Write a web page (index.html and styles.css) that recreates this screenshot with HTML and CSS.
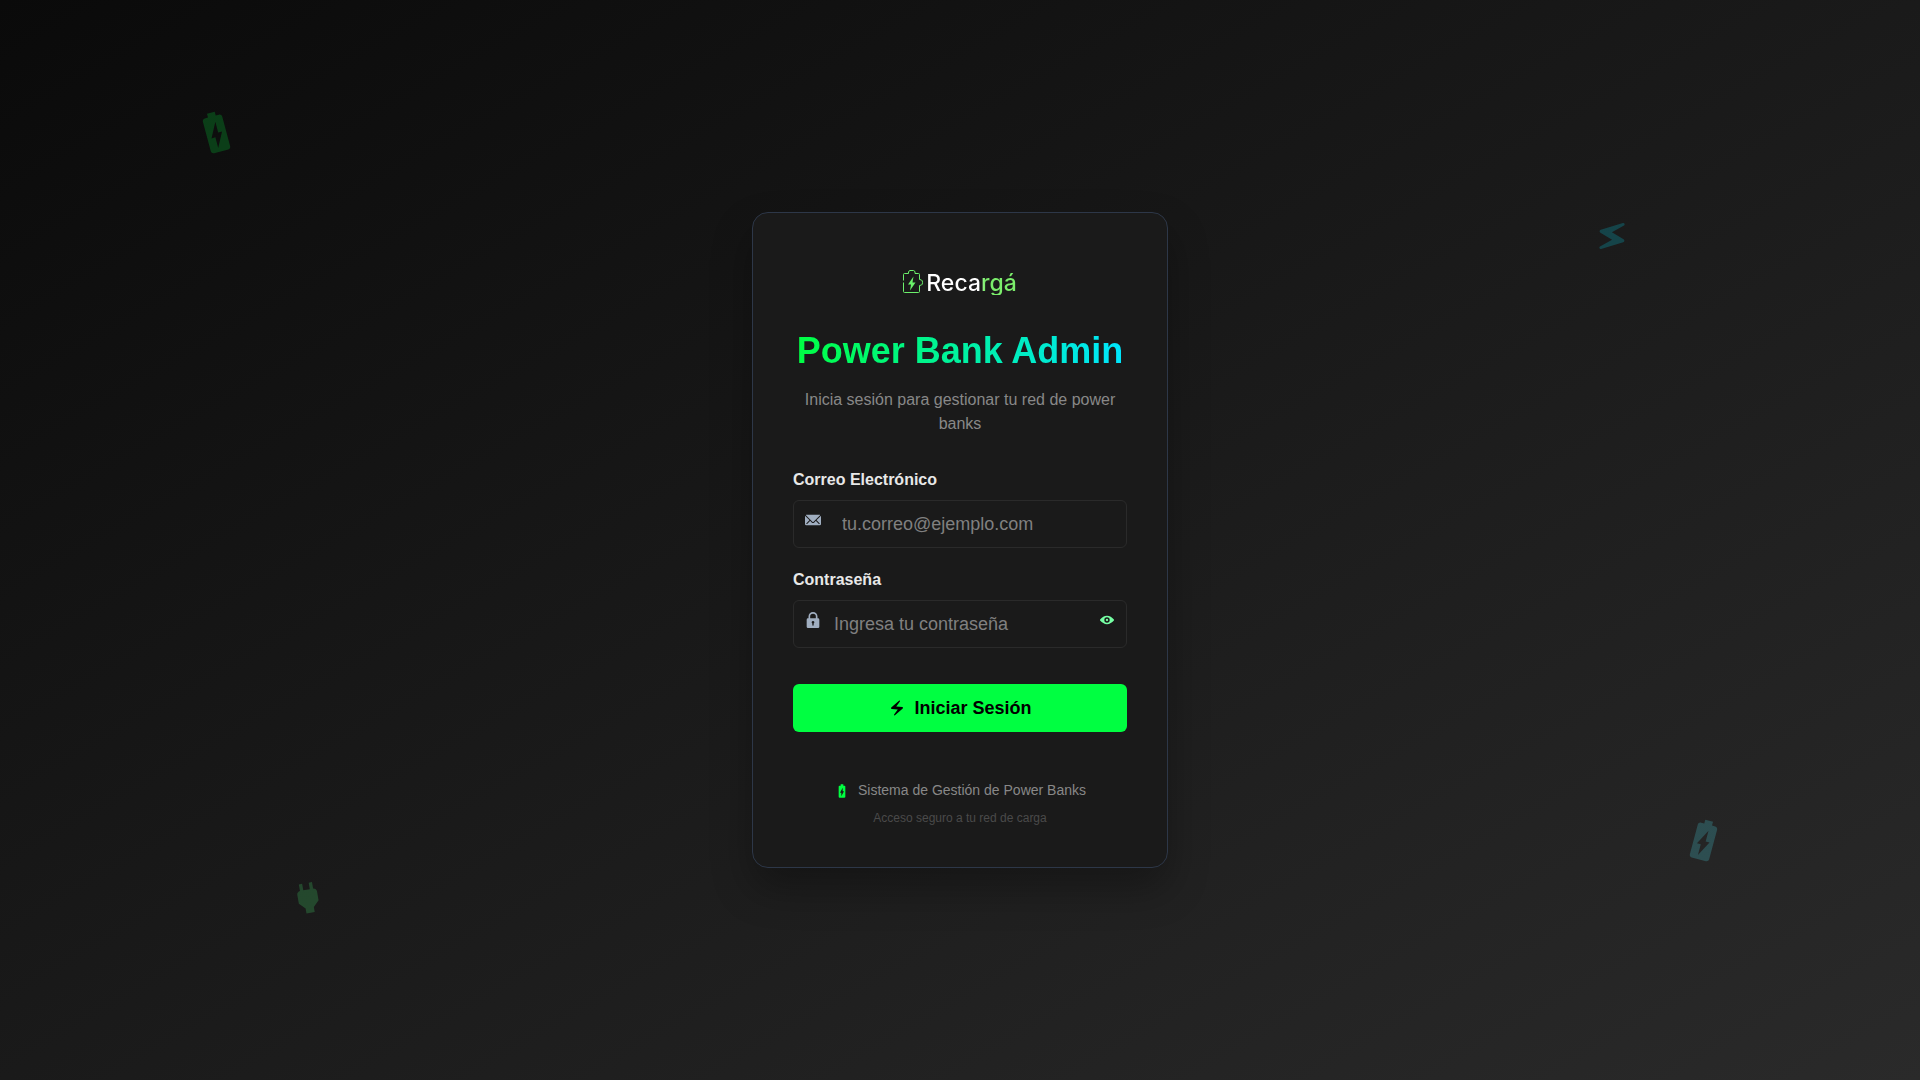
FILE: index.html
```
<!DOCTYPE html>
<html lang="es">
<head>
    <meta charset="UTF-8">
    <meta name="viewport" content="width=device-width, initial-scale=1.0">
    <title>Power Bank Admin</title>
    <link rel="stylesheet" href="styles.css">
</head>
<body>
    <!-- Iconos compartidos -->
    <svg class="sprite" aria-hidden="true">
        <symbol id="battery" viewBox="0 0 24 24">
            <path d="M15.67 4H14V2h-4v2H8.33C7.6 4 7 4.6 7 5.33v15.33C7 21.4 7.6 22 8.33 22h7.33c.74 0 1.34-.6 1.34-1.33V5.33C17 4.6 16.4 4 15.67 4zM11 20v-5.5H9L13 7v5.5h2L11 20z"/>
        </symbol>
        <symbol id="bolt" viewBox="0 0 24 24">
            <path d="M14.69 2.21 4.33 11.49c-.64.58-.28 1.65.58 1.73L13 14l-4.85 6.76c-.22.31-.19.74.08 1.01.3.3.77.31 1.08.02l10.36-9.28c.64-.58.28-1.65-.58-1.73L11 10l4.85-6.76c.22-.31.19-.74-.08-1.01-.3-.3-.77-.31-1.08-.02z"/>
        </symbol>
        <symbol id="plug" viewBox="0 0 24 24">
            <path d="M16.01 7 16 3h-2v4h-4V3H8v4h-.01C7 6.99 6 7.99 6 8.99v5.49L9.5 18v3h5v-3l3.5-3.51v-5.5c0-1-1-2-1.99-1.99z"/>
        </symbol>
    </svg>

    <!-- Iconos de fondo -->
    <svg class="floating battery-left" aria-hidden="true"><use href="#battery"/></svg>
    <svg class="floating bolt-right" aria-hidden="true"><use href="#bolt"/></svg>
    <svg class="floating plug-left" aria-hidden="true"><use href="#plug"/></svg>
    <svg class="floating battery-right" aria-hidden="true"><use href="#battery"/></svg>

    <main class="container">
        <div class="card">
            <div class="logo">
                <svg class="logo-icon" viewBox="1 2 20 26" aria-hidden="true">
                    <path class="outline" d="M1.5 12.5V6.5Q1.5 5.5 2.5 5.5H6.5V4Q7 2.5 8 2.5H11.5Q12.5 2.5 13 4V5.5H16.5Q17.5 5.5 17.5 6.5V11.5L19.5 12Q20.5 12.5 20.5 14.5Q20.5 16.5 19.5 17L17.5 17.5V23.5Q17.5 24.5 16.5 24.5H2.5Q1.5 24.5 1.5 23.5V14.5"/>
                    <path class="spark" d="M11.5 8.5L6 16.5H9L8 22.5L13.5 14.5H10.5Z"/>
                </svg>
                <span class="logo-text">Recargá</span>
            </div>

            <h1>Power Bank Admin</h1>
            <p class="subtitle">Inicia sesión para gestionar tu red de power banks</p>

            <form>
                <div class="form-group">
                    <label for="email">Correo Electrónico</label>
                    <div class="input-group">
                        <svg class="input-icon" viewBox="0 0 24 24" aria-hidden="true">
                            <path d="M11.114,14.556a1.252,1.252,0,0,0,1.768,0L22.568,4.87a.5.5,0,0,0-.281-.849A1.966,1.966,0,0,0,22,4H2a1.966,1.966,0,0,0-.289.021.5.5,0,0,0-.281.849Z"/>
                            <path d="M23.888,5.832a.182.182,0,0,0-.2.039l-6.2,6.2a.251.251,0,0,0,0,.354l4.343,4.343a.75.75,0,1,1-1.06,1.061l-4.343-4.343a.249.249,0,0,0-.354,0l-2.123,2.123a2.75,2.75,0,0,1-3.888,0L7.939,13.485a.251.251,0,0,0-.354,0L3.242,17.828a.75.75,0,1,1-1.061-1.061l4.343-4.343a.251.251,0,0,0,0-.354l-6.2-6.2a.18.18,0,0,0-.2-.039A.182.182,0,0,0,0,6V18a2,2,0,0,0,2,2H22a2,2,0,0,0,2-2V6A.181.181,0,0,0,23.888,5.832Z"/>
                        </svg>
                        <input class="email-input" type="email" id="email" placeholder="tu.correo@ejemplo.com">
                    </div>
                </div>

                <div class="form-group">
                    <label for="password">Contraseña</label>
                    <div class="input-group">
                        <svg class="input-icon" viewBox="0 0 24 24" aria-hidden="true">
                            <path d="M19.5,9.5h-.75V6.75a6.75,6.75,0,0,0-13.5,0V9.5H4.5a2,2,0,0,0-2,2V22a2,2,0,0,0,2,2h15a2,2,0,0,0,2-2V11.5A2,2,0,0,0,19.5,9.5Zm-9.5,6a2,2,0,1,1,3,1.723V19.5a1,1,0,0,1-2,0V17.223A1.994,1.994,0,0,1,10,15.5ZM7.75,6.75a4.25,4.25,0,0,1,8.5,0V9a.5.5,0,0,1-.5.5h-7.5a.5.5,0,0,1-.5-.5Z"/>
                        </svg>
                        <input class="password-input" type="password" id="password" placeholder="Ingresa tu contraseña">
                        <button class="toggle-password" type="button" id="togglePassword" aria-label="Mostrar contraseña">
                            <svg viewBox="0 0 24 24" aria-hidden="true">
                                <path d="M23.432,10.524C20.787,7.614,16.4,4.538,12,4.6,7.6,4.537,3.213,7.615.568,10.524a2.211,2.211,0,0,0,0,2.948C3.182,16.351,7.507,19.4,11.839,19.4h.308c4.347,0,8.671-3.049,11.288-5.929A2.21,2.21,0,0,0,23.432,10.524ZM7.4,12A4.6,4.6,0,1,1,12,16.6,4.6,4.6,0,0,1,7.4,12Z"/>
                                <circle cx="12" cy="12" r="2"/>
                            </svg>
                        </button>
                    </div>
                </div>

                <button class="btn" type="submit">
                    <svg aria-hidden="true"><use href="#bolt"/></svg>
                    Iniciar Sesión
                </button>
            </form>

            <div class="card-footer">
                <p class="system">
                    <svg aria-hidden="true"><use href="#battery"/></svg>
                    Sistema de Gestión de Power Banks
                </p>
                <p class="access">Acceso seguro a tu red de carga</p>
            </div>
        </div>
    </main>

    <script>
        const password = document.getElementById('password');

        // Mostrar u ocultar la contraseña
        document.getElementById('togglePassword').addEventListener('click', () => {
            password.type = password.type === 'password' ? 'text' : 'password';
        });
    </script>
</body>
</html>
```
FILE: styles.css
```
* {
    margin: 0;
    padding: 0;
    box-sizing: border-box;
}

body {
    position: relative;
    display: flex;
    align-items: center;
    justify-content: center;
    min-height: 100vh;
    overflow-x: hidden;
    font-family: "Liberation Sans", Arial, sans-serif;
    font-size: 16px;
    line-height: 24px;
    color: #e8e8e8;
    background: linear-gradient(to bottom right, #0a0a0a 0%, #1a1a1a 50%, #2a2a2a 100%);
}

svg {
    display: block;
    flex-shrink: 0;
    fill: currentColor;
}

.sprite {
    position: absolute;
    width: 0;
    height: 0;
}

/* Iconos de fondo */
.floating {
    position: absolute;
    width: 40px;
    height: 40px;
    opacity: 0.2;
}

.battery-left {
    top: 10%;
    left: 10%;
    width: 48px;
    height: 48px;
    color: #00ff41;
    transform: rotate(-15deg);
}

.bolt-right {
    top: 20%;
    right: 15%;
    color: #00e5ff;
    transform: rotate(25deg);
}

.plug-left {
    bottom: 15%;
    left: 15%;
    color: #4dff7c;
    transform: rotate(-10deg);
}

.battery-right {
    right: 10%;
    bottom: 20%;
    width: 48px;
    height: 48px;
    color: #4df0ff;
    transform: rotate(15deg);
}

.container {
    position: relative;
    width: 100%;
    max-width: 448px;
    padding: 16px;
}

.card {
    padding: 40px;
    background: #1a1a1a;
    border: 1px solid #2d3748;
    border-radius: 16px;
    box-shadow: 0 20px 40px rgba(0, 0, 0, 0.3);
}

.logo {
    display: flex;
    align-items: center;
    justify-content: center;
    gap: 3px;
    height: 60px;
    margin-bottom: 16px;
}

.logo-icon {
    width: 20px;
    height: 26px;
    color: #6bf06b;
}

.logo-icon .outline {
    fill: none;
    stroke: currentColor;
}

.logo-text {
    font-family: Inter, "Open Sans", sans-serif;
    font-size: 23px;
    font-weight: 500;
    background: linear-gradient(90deg, #fff 58%, #7bed6b 64%);
    -webkit-background-clip: text;
    background-clip: text;
    color: transparent;
}

h1 {
    margin-bottom: 16px;
    font-size: 36px;
    line-height: 43px;
    text-align: center;
    background: linear-gradient(to right, #00ff41, #00e5ff);
    -webkit-background-clip: text;
    background-clip: text;
    color: transparent;
}

.subtitle {
    margin-bottom: 32px;
    text-align: center;
    color: #888;
}

.form-group {
    margin-bottom: 20px;
}

.form-group label {
    display: block;
    margin-bottom: 8px;
    font-weight: bold;
}

.input-group {
    position: relative;
}

.input-group input {
    display: block;
    width: 100%;
    height: 48px;
    font-family: inherit;
    font-size: 18px;
    color: #e8e8e8;
    background: transparent;
    border: 1px solid #2a2a2a;
    border-radius: 6px;
    outline: none;
}

.input-group input:focus {
    border-color: #00ff41;
}

.input-group input::placeholder {
    color: #808080;
}

.input-group .email-input {
    padding: 0 16px 0 48px;
}

.input-group .password-input {
    padding: 0 40px;
}

.input-icon {
    position: absolute;
    top: 12px;
    left: 12px;
    width: 16px;
    height: 16px;
    color: #a0aec0;
}

.toggle-password {
    position: absolute;
    top: 0;
    right: 0;
    display: flex;
    align-items: center;
    justify-content: center;
    width: 40px;
    height: 40px;
    color: #76ffa4;
    background: none;
    border: none;
    cursor: pointer;
}

.toggle-password svg {
    width: 14px;
    height: 14px;
}

.btn {
    display: flex;
    align-items: center;
    justify-content: center;
    gap: 8px;
    width: 100%;
    height: 48px;
    margin-top: 36px;
    font-family: inherit;
    font-size: 18px;
    font-weight: bold;
    line-height: 22px;
    color: #000;
    background: #00ff41;
    border: none;
    border-radius: 6px;
    cursor: pointer;
}

.btn:hover {
    background: #00e63a;
}

.btn svg {
    width: 18px;
    height: 18px;
}

.card-footer {
    margin-top: 48px;
    text-align: center;
}

.system {
    display: flex;
    align-items: center;
    justify-content: center;
    gap: 8px;
    margin-bottom: 8px;
    font-size: 14px;
    line-height: 21px;
    color: #888;
}

.system svg {
    width: 16px;
    height: 16px;
    color: #00ff41;
}

.access {
    font-size: 12px;
    line-height: 18px;
    color: #4a4a4a;
}
```
